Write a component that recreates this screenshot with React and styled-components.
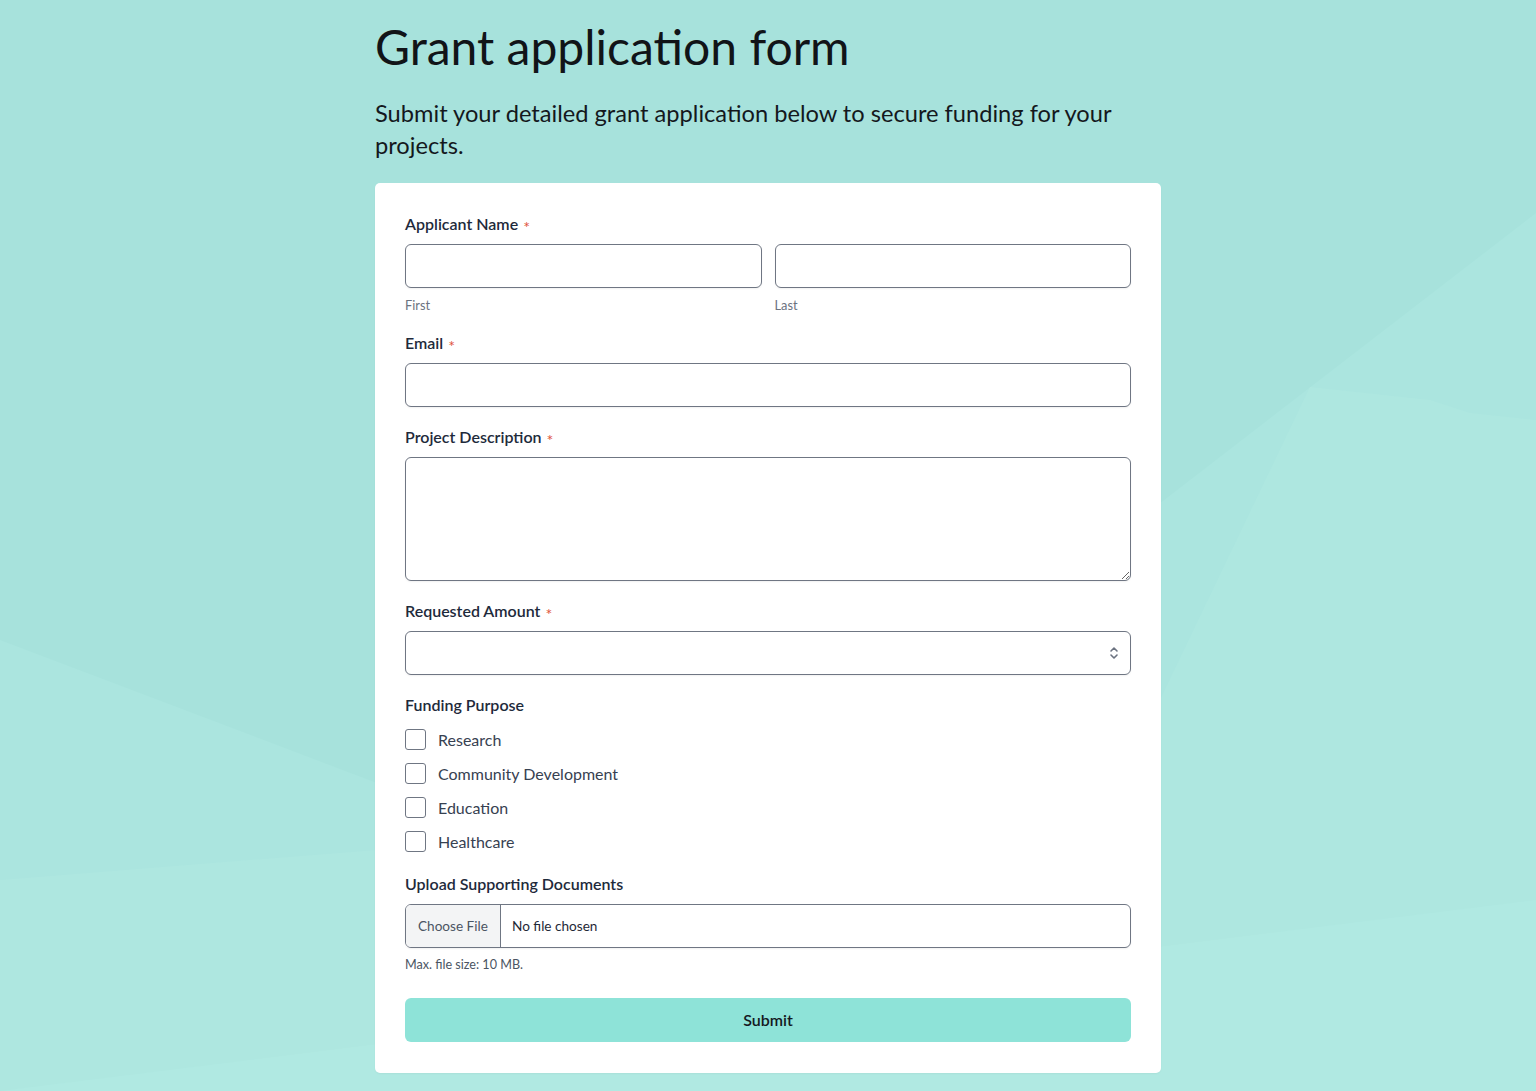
import React from "react";
import styled, { createGlobalStyle } from "styled-components";

const GlobalStyle = createGlobalStyle`
  html, body { margin: 0; padding: 0; }
  body {
    background: #a7e2dc;
    font-family: Lato, "Open Sans", Arial, sans-serif;
    color: #1f2937;
  }
  * { box-sizing: border-box; }
`;

const Page = styled.div`
  position: relative;
  min-height: 1091px;
  overflow: hidden;
`;

const Backdrop = styled.svg`
  position: absolute;
  inset: 0;
  width: 100%;
  height: 100%;
  z-index: 0;
`;

const Container = styled.main`
  position: relative;
  z-index: 1;
  width: 786px;
  margin: 0 auto;
  padding-top: 18px;
`;

const Title = styled.h1`
  margin: 0;
  font-size: 48px;
  line-height: 58px;
  font-weight: 400;
  color: #111418;
`;

const Subtitle = styled.p`
  margin: 21px 0 22px;
  font-size: 23.65px;
  line-height: 32px;
  color: #14181d;
`;

const Card = styled.form`
  background: #ffffff;
  border-radius: 5px;
  box-shadow: 0 1px 2px rgba(0, 0, 0, 0.04);
  padding: 30px 30px 31px;
  display: flex;
  flex-direction: column;
  gap: 19px;
`;

const Field = styled.div`
  display: flex;
  flex-direction: column;
`;

const Label = styled.label`
  display: flex;
  align-items: center;
  font-size: 16px;
  line-height: 22px;
  font-weight: 600;
  color: #1e2a3b;
  margin-bottom: ${(p) => (p.$tight ? "11px" : "9px")};
`;

const Req = styled.span`
  display: inline-block;
  color: #e0533c;
  font-size: 16px;
  line-height: 1;
  margin-left: 5px;
  font-weight: 400;
  transform: translateY(3px);
`;

const Row = styled.div`
  display: grid;
  grid-template-columns: 1fr 1fr;
  column-gap: 13px;
`;

const Sub = styled.div`
  display: flex;
  flex-direction: column;
`;

const Hint = styled.span`
  font-size: 12.8px;
  line-height: 16px;
  color: #6b7280;
  margin-top: 9px;
`;

const Input = styled.input`
  height: 44px;
  width: 100%;
  border: 1px solid #6f7683;
  border-radius: 6px;
  background: #fff;
  box-shadow: 0 1px 2px rgba(0, 0, 0, 0.06);
  font: inherit;
  padding: 0 12px;
  outline: none;
`;

const TextArea = styled.textarea`
  height: 124px;
  width: 100%;
  border: 1px solid #6f7683;
  border-radius: 6px;
  background: #fff;
  box-shadow: 0 1px 2px rgba(0, 0, 0, 0.06);
  font: inherit;
  padding: 10px 12px;
  outline: none;
  resize: vertical;
  display: block;
`;

const SelectWrap = styled.div`
  position: relative;
`;

const Select = styled.select`
  appearance: none;
  height: 44px;
  width: 100%;
  border: 1px solid #6f7683;
  border-radius: 6px;
  background: #fff;
  box-shadow: 0 1px 2px rgba(0, 0, 0, 0.06);
  font: inherit;
  padding: 0 12px;
  outline: none;
`;

const SelectIcon = styled.svg`
  position: absolute;
  right: 10px;
  top: 14px;
  pointer-events: none;
`;

const Checks = styled.div`
  display: flex;
  flex-direction: column;
  gap: 10px;
`;

const CheckRow = styled.label`
  display: flex;
  align-items: center;
  height: 24.2px;
  font-size: 16px;
  color: #374151;
`;

const Box = styled.span`
  width: 21px;
  height: 21px;
  border: 1.5px solid #6f7683;
  border-radius: 3px;
  background: #fff;
  margin-right: 12px;
  flex-shrink: 0;
`;

const FileBox = styled.div`
  display: flex;
  height: 44px;
  border: 1px solid #6f7683;
  border-radius: 6px;
  overflow: hidden;
  box-shadow: 0 1px 2px rgba(0, 0, 0, 0.06);
  font-size: 13.6px;
`;

const FileButton = styled.span`
  display: flex;
  align-items: center;
  padding: 0 12px;
  width: 95px;
  background: #f3f4f5;
  border-right: 1px solid #6f7683;
  color: #4b5563;
`;

const FileName = styled.span`
  display: flex;
  align-items: center;
  padding-left: 11px;
  color: #1f2937;
`;

const Note = styled.span`
  font-size: 12.6px;
  line-height: 16px;
  color: #4b5563;
  margin-top: 9px;
`;

const Submit = styled.button`
  margin-top: 6px;
  height: 44px;
  border: none;
  border-radius: 6px;
  background: #8ee3d8;
  font: inherit;
  font-size: 16px;
  font-weight: 600;
  color: #15191e;
  cursor: pointer;
`;

const Required = () => <Req>*</Req>;

export default function App() {
  return (
    <>
      <GlobalStyle />
      <Page>
        <Backdrop viewBox="0 0 1536 1091" preserveAspectRatio="none" aria-hidden="true">
          <rect x="0" y="0" width="1536" height="1091" fill="#a7e2dc" />
          <polygon points="0,640 659,890 1536,213 1536,1091 0,1091" fill="#abe5df" />
          <polygon points="0,880 376,850 1160,700 1310,387 1430,400 1470,413 1536,420 1536,1091 0,1091" fill="#aee7e0" />
          <polygon points="0,1091 1536,900 1536,1091" fill="#b0e9e2" />
        </Backdrop>
        <Container>
          <Title>Grant application form</Title>
          <Subtitle>
            Submit your detailed grant application below to secure funding for your projects.
          </Subtitle>
          <Card onSubmit={(e) => e.preventDefault()}>
            <Field>
              <Label>
                Applicant Name <Required />
              </Label>
              <Row>
                <Sub>
                  <Input type="text" />
                  <Hint>First</Hint>
                </Sub>
                <Sub>
                  <Input type="text" />
                  <Hint>Last</Hint>
                </Sub>
              </Row>
            </Field>
            <Field>
              <Label>
                Email <Required />
              </Label>
              <Input type="email" />
            </Field>
            <Field>
              <Label>
                Project Description <Required />
              </Label>
              <TextArea />
            </Field>
            <Field>
              <Label>
                Requested Amount <Required />
              </Label>
              <SelectWrap>
                <Select defaultValue="">
                  <option value=""></option>
                </Select>
                <SelectIcon width="14" height="16" viewBox="0 0 14 16" fill="none">
                  <path d="M4 6l3-3 3 3M4 10l3 3 3-3" stroke="#6b7280" strokeWidth="1.6" strokeLinecap="round" strokeLinejoin="round" />
                </SelectIcon>
              </SelectWrap>
            </Field>
            <Field>
              <Label $tight>Funding Purpose</Label>
              <Checks>
                {["Research", "Community Development", "Education", "Healthcare"].map((t) => (
                  <CheckRow key={t}>
                    <Box />
                    {t}
                  </CheckRow>
                ))}
              </Checks>
            </Field>
            <Field>
              <Label>Upload Supporting Documents</Label>
              <FileBox>
                <FileButton>Choose File</FileButton>
                <FileName>No file chosen</FileName>
              </FileBox>
              <Note>Max. file size: 10 MB.</Note>
            </Field>
            <Submit type="submit">Submit</Submit>
          </Card>
        </Container>
      </Page>
    </>
  );
}
